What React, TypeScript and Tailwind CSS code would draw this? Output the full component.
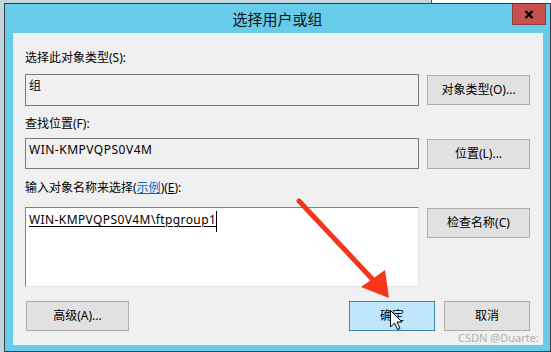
import React from "react";

const font = "font-['Noto_Sans','Noto_Sans_CJK_SC',sans-serif]";

function Btn({ children, w, active }: { children: React.ReactNode; w: string; active?: boolean }) {
  return (
    <div
      className={`${w} h-[30px] flex items-center justify-center border text-[12px] leading-[16px] text-black ${
        active ? "bg-[#bee6fd] border-[#3c7fb1]" : "bg-[#e1e1e1] border-[#adadad]"
      }`}
    >
      {children}
    </div>
  );
}

export default function App() {
  return (
    <div className={`relative w-[551px] h-[352px] overflow-hidden bg-[#c3d6de] flex flex-col ${font}`}>
      {/* background strip above window */}
      <div className="h-[3px] flex">
        <div className="flex-1 bg-[#c3d6de]" />
        <div className="w-[120px] bg-white border-l border-[#5a5a5a]" />
      </div>
      <div className="flex flex-1">
        <div className="w-[4px]" />
        {/* window */}
        <div className="flex-1 flex flex-col border border-[#3b3b3b] bg-[#67cbea]">
          {/* title bar */}
          <div className="h-[29px] grid grid-cols-[1fr_auto_1fr]">
            <div />
            <div className="flex items-center text-[15px] leading-[20px] text-[#111] pt-[1px]">选择用户或组</div>
            <div className="flex justify-end pr-[4px]">
              <div className="w-[34px] h-[21px] bg-[#c75050] border border-[#8e3b3b] border-t-0 flex items-center justify-center">
                <svg width="10" height="9" viewBox="0 0 10 9">
                  <path d="M1.5 1 L8.5 8 M8.5 1 L1.5 8" stroke="#000" strokeWidth="2.2" />
                </svg>
              </div>
            </div>
          </div>
          {/* panel */}
          <div className="flex-1 ml-[8px] mr-[7px] mb-[6px] bg-[#f0f0f0] pl-[12px] flex flex-col text-[12px] leading-[16px] text-black">
            <div className="mt-[17px]">选择此对象类型(S):</div>
            <div className="mt-[8px] flex gap-[8px] items-start">
              <div className="w-[394px] h-[32px] border border-[#7a7a7a] pl-[3px] pt-[3px]">组</div>
              <div className="mt-[1px]">
                <Btn w="w-[103px]">对象类型(O)...</Btn>
              </div>
            </div>
            <div className="mt-[10px]">查找位置(F):</div>
            <div className="mt-[6px] flex gap-[8px] items-start">
              <div className="w-[394px] h-[31px] border border-[#7a7a7a] pl-[3px] pt-[3px] tracking-[0.5px]">WIN-KMPVQPS0V4M</div>
              <div className="mt-[1px]">
                <Btn w="w-[103px]">位置(L)...</Btn>
              </div>
            </div>
            <div className="mt-[11px]">
              输入对象名称来选择(<span className="text-[#0066cc] underline">示例</span>)(<span className="underline">E</span>):
            </div>
            <div className="mt-[11px] flex gap-[8px] items-start">
              <div className="w-[394px] h-[80px] bg-white border border-[#828282] border-r-[#e3e3e3] border-b-[#e3e3e3] pl-[3px] pt-[4px] flex items-start">
                <span className="underline underline-offset-[2px] tracking-[0.4px]">WIN-KMPVQPS0V4M\ftpgroup1</span>
                <span className="w-[1px] h-[21px] bg-black -mt-[1px]" />
              </div>
              <div className="mt-[1px]">
                <Btn w="w-[103px]">检查名称(C)</Btn>
              </div>
            </div>
            <div className="mt-[14px] flex items-start">
              <div className="ml-[1px]">
                <Btn w="w-[103px]">高级(A)...</Btn>
              </div>
              <div className="ml-[220px]">
                <Btn w="w-[86px]" active>
                  确定
                </Btn>
              </div>
              <div className="ml-[9px]">
                <Btn w="w-[86px]">取消</Btn>
              </div>
            </div>
          </div>
        </div>
      </div>

      {/* watermark */}
      <div className="absolute left-[458px] top-[330px] text-[11px] leading-[16px] text-[#b0b0b0] font-['Noto_Sans',sans-serif] whitespace-nowrap">
        CSDN @Duarte:
      </div>

      {/* annotation arrow + cursor */}
      <svg className="absolute left-0 top-0 pointer-events-none" width="551" height="352" viewBox="0 0 551 352">
        <line x1="299" y1="201" x2="376" y2="283" stroke="#f4371c" strokeWidth="5" strokeLinecap="round" />
        <polygon points="389,298 361,287 385,270" fill="#f4371c" />
        <path
          d="M390.5 310.5 L390.5 327 L394.5 323 L397.5 329.5 L400 328.5 L397 322 L402 322 Z"
          fill="#fff"
          stroke="#000"
          strokeWidth="1"
        />
      </svg>
    </div>
  );
}
